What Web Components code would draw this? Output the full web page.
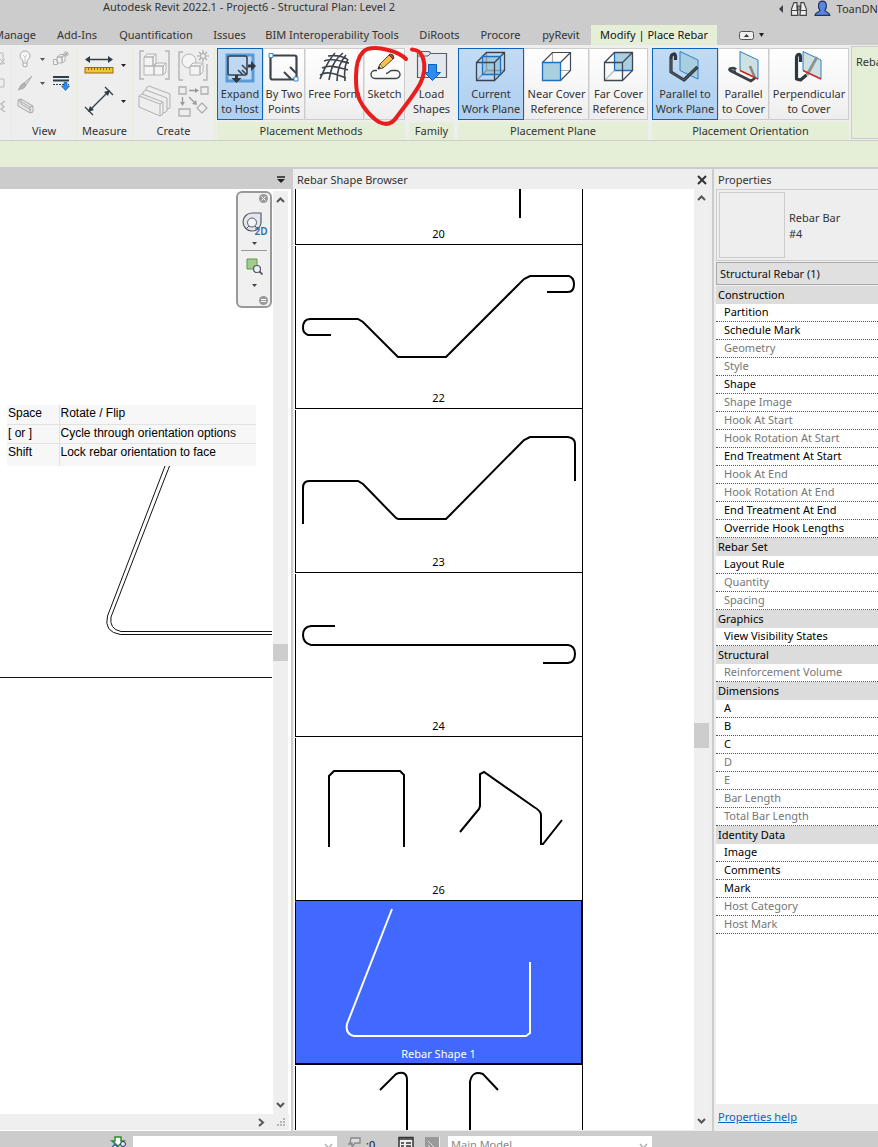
<!DOCTYPE html>
<html lang="en">
<head>
<meta charset="utf-8">
<title>Autodesk Revit 2022.1 - Project6 - Structural Plan: Level 2</title>
<style>
html, body { margin: 0; height: 100%; overflow: hidden; }
body { font: 11px/16px "Noto Sans", "Open Sans", sans-serif; color: #333; background: #ccc; }
</style>
</head>
<body>
<revit-app></revit-app>

<script>
function define(name, markup, setup) {
  const template = document.createElement('template');
  template.innerHTML = '<style>*{box-sizing:border-box}button{font:inherit;color:inherit;background:none;border:0;padding:0;margin:0}svg{display:block}</style>' + markup;
  customElements.define(name, class extends HTMLElement {
    constructor() {
      super();
      this.attachShadow({ mode: 'open' }).append(template.content.cloneNode(true));
    }
    connectedCallback() { if (setup) setup(this, this.shadowRoot); }
  });
}

/* ---------- title bar ---------- */
define('title-bar', `
<style>
:host { display: flex; height: 25px; position: relative; flex: none; }
h1 { margin: 0; padding-left: 103px; font-size: 11px; line-height: 13px; font-weight: 400; flex: 1; white-space: nowrap; }
.account { display: flex; align-items: center; gap: 6px; height: 17px; width: 100px; white-space: nowrap; }
</style>
<h1>Autodesk Revit 2022.1 - Project6 - Structural Plan: Level 2</h1>
<div class="account">
  <svg width="6" height="8" viewBox="0 0 6 8"><path d="M5 0v8L1 4z" fill="#3a3f47"/></svg>
  <svg width="18" height="17" viewBox="0 0 18 17"><g fill="#eee" stroke="#444" stroke-width="1.2"><path d="M4 2.500h3v4l1 9H1.500V9z"/><path d="M11 2.500h3l2.500 6.500v6.500H10l1-9z"/><path d="M7.500 6h3v4h-3z" fill="#999"/><path d="M1.500 10.500h6M10.500 10.500h6"/></g></svg>
  <svg width="17" height="17" viewBox="0 0 17 17"><path d="M1 15.500c0-3 4-3 5-5C3.500 7 4 1 8.500 1S13.500 7 11 10.500c1 2 5 2 5 5z" fill="#5b86e0" stroke="#22335f" stroke-width="1.200"/></svg>
  <span>ToanDN</span>
</div>`);

/* ---------- ribbon tabs ---------- */
define('ribbon-tabs', `
<style>
:host { display: flex; height: 20px; flex: none; }
button { flex: none; height: 20px; line-height: 20px; text-align: center; white-space: nowrap; width: var(--w); }
.first { display: flex; justify-content: flex-end; width: 46px; padding-right: 10px; overflow: hidden; }
.active { background: #e5efd8; color: #111; }
.more { display: flex; align-items: center; gap: 5px; margin-left: 22px; }
</style>
<button class="first">Manage</button>
<button style="--w:62px">Add-Ins</button>
<button style="--w:96px">Quantification</button>
<button style="--w:51px">Issues</button>
<button style="--w:154px">BIM Interoperability Tools</button>
<button style="--w:61px">DiRoots</button>
<button style="--w:61px">Procore</button>
<button style="--w:60px">pyRevit</button>
<button class="active" style="--w:126px">Modify | Place Rebar</button>
<button class="more" aria-label="Minimize ribbon">
  <svg width="15" height="9" viewBox="0 0 15 9"><rect x=".5" y=".5" width="14" height="8" rx="2" fill="#eee" stroke="#555"/><path d="M5 6l2.500-3L10 6z" fill="#333"/></svg>
  <svg width="5" height="4" viewBox="0 0 5 4"><path d="M0 0h5L2.500 4z" fill="#222"/></svg>
</button>`);

/* ---------- ribbon building blocks ---------- */
define('ribbon-panel', `
<style>
:host { display: flex; flex-direction: column; flex: none; width: var(--w); padding: 1px 2px 0; border-right: 1px solid #e5efd8; background: #eee; }
:host([contextual]) { border-right: 0; }
.tools { display: flex; height: 75px; }
.label { height: 18px; line-height: 18px; text-align: center; white-space: nowrap; }
:host([contextual]) .label { background: #e5efd8; }
</style>
<div class="tools"><slot></slot></div>
<div class="label"></div>`,
(host, root) => { root.querySelector('.label').textContent = host.getAttribute('label') || ''; });

define('ribbon-button', `
<style>
:host { display: block; width: var(--w); height: 74px; padding-top: 1px; }
button { display: flex; flex-direction: column; align-items: center; width: 100%; height: 72px; padding-top: 2px; gap: 3px;
  border: 1px solid #ccc; border-left-color: #e2e2e2; background: linear-gradient(#fff, #eee); line-height: 15px; text-align: center; white-space: pre; }
:host([plain]) button { border-color: transparent; background: none; }
:host([checked]) button { border-color: #0a64bd; background: linear-gradient(#c3dbf4, #aed0f1); }
svg, ::slotted(svg) { display: block; flex: none; }
</style>
<button><slot></slot><span></span></button>`,
(host, root) => { root.querySelector('span').textContent = host.getAttribute('label').replace('|', '\n'); });

define('ribbon-bar', `
<style>
:host { display: flex; height: 95px; flex: none; background: #eee; border-top: 1px solid #eee; overflow: hidden; position: relative; }
.cut { display: grid; grid-template-rows: 24px 24px 22px; width: 8px; align-items: center; margin-left: -2px; }
.view { display: grid; grid-template-columns: 22px 12px 1fr; grid-template-rows: 24px 24px 22px; width: 100%; align-items: center; justify-items: center; }
.measure { display: grid; grid-template-columns: 34px 1fr; grid-template-rows: 36px 36px; padding-left: 3px; width: 100%; place-items: center; }
.create { display: grid; grid-template-columns: 39px 37px; grid-template-rows: 36px 36px; width: 100%; place-items: center; }
.rebar { flex: 1; min-width: 0; height: 93px; background: #e5efd8; border: 1px solid #ccc; border-right: 0; padding: 7px 0 0 4px; white-space: nowrap; }
</style>
<ribbon-panel style="--w:12px"><div class="cut">
  <svg width="6" height="16" viewBox="0 0 6 16"><path d="M0 2h3v11H0M0 8l5 5M5 8l-5 5" fill="none" stroke="#bbb"/></svg>
  <svg width="6" height="16" viewBox="0 0 6 16"><path d="M0 4h4v8H0" fill="none" stroke="#bbb"/></svg>
  <svg width="6" height="16" viewBox="0 0 6 16"><path d="M5 3L1 6l3 3-3 2 4 3" fill="none" stroke="#bbb" stroke-width="1.500"/></svg>
</div></ribbon-panel>
<ribbon-panel label="View" style="--w:65px"><div class="view">
  <button aria-label="Hide in view"><svg width="16" height="18" viewBox="0 0 16 18"><path d="M6 12C6 9 3 9 3 6a5 5 0 0 1 10 0c0 3-3 3-3 6v4l-2 1-2-1zM6 13h4" fill="#f7f7f7" stroke="#aaa"/><path d="M6 5l2 2 2-2M8 7v5" fill="none" stroke="#ccc"/></svg></button>
  <svg width="5" height="3" viewBox="0 0 5 3"><path d="M0 0h5L2.500 3z" fill="#555"/></svg>
  <button aria-label="Override graphics"><svg width="18" height="16" viewBox="0 0 18 16"><g fill="#f2f2f2" stroke="#aaa" stroke-width=".9"><path d="M1.500 8.500h4v5h-4zM5 6l3-2.500h4L9.500 6zM5 6h5v6H5zM10 6l3-2v6l-3 2z"/><path d="M14 0v6M11 3h6M12 1l4 4M16 1l-4 4"/></g></svg></button>
  <button aria-label="Paint"><svg width="16" height="16" viewBox="0 0 16 16"><path d="M15 1L7 8l2 2z" fill="#ddd" stroke="#aaa"/><path d="M7 8l2 2c-1 4-5 4-8 5 2-2 2-6 6-7z" fill="#b4b4b4" stroke="#999" stroke-width=".6"/></svg></button>
  <svg width="5" height="3" viewBox="0 0 5 3"><path d="M0 0h5L2.500 3z" fill="#555"/></svg>
  <button aria-label="Linework"><svg width="17" height="16" viewBox="0 0 17 16"><path d="M0 2h16M0 5.500h16" stroke="#2f3c49" stroke-width="2"/><path d="M0 9.500h16" stroke="#2f3c49" stroke-dasharray="2 1"/><path d="M11 7.500h3V11h2.500l-4 4.500L8.500 11H11z" fill="#2c8cf0" stroke="#0a5cb8" stroke-width=".7"/></svg></button>
  <button aria-label="Section box"><svg width="17" height="16" viewBox="0 0 17 16"><path d="M1 2l3-1 12 7v6l-3 1L1 8zM1 2l12 7v6M13 9l3-1M4 1v5l10 6" fill="#e6e6e6" stroke="#aaa"/></svg></button>
</div></ribbon-panel>
<ribbon-panel label="Measure" style="--w:56px"><div class="measure">
  <button aria-label="Measure between references"><svg width="30" height="20" viewBox="0 0 30 20"><path d="M3 4.500h24" stroke="#2f3c49" stroke-width="1.500"/><path d="M1 4.500L6 1v7zM29 4.500L24 1v7z" fill="#2f3c49"/><rect x="1" y="12.500" width="28" height="5.500" fill="#f3c433" stroke="#a0641a"/><path d="M4.500 13v2M7.500 13v2M10.500 13v2M13.500 13v2M16.500 13v2M19.500 13v2M22.500 13v2M25.500 13v2" stroke="#7a4c10" stroke-width=".8"/></svg></button>
  <svg width="5" height="3" viewBox="0 0 5 3"><path d="M0 0h5L2.500 3z" fill="#222"/></svg>
  <button aria-label="Aligned dimension"><svg width="30" height="30" viewBox="0 0 30 30"><path d="M6 24L24 6M1 21l8 8M21 1l8 8" stroke="#2f3c49" stroke-width="1.300"/><path d="M4 26l2-6 4 4zM26 4l-6 2 4 4z" fill="#2f3c49"/></svg></button>
  <svg width="5" height="3" viewBox="0 0 5 3"><path d="M0 0h5L2.500 3z" fill="#222"/></svg>
</div></ribbon-panel>
<ribbon-panel label="Create" style="--w:82px"><div class="create">
  <button aria-label="Create group"><svg width="31" height="30" viewBox="0 0 31 30"><g fill="none" stroke="#b4b4b4" stroke-width="1.400"><path d="M5 1H1v28h4M26 1h4v28h-4"/></g><g fill="#f4f4f4" stroke="#b4b4b4"><path d="M5 7h9v9H5zM5 7l3-3h9l-3 3zM14 7l3-3v9l-3 3zM5 16h10v9H5zM15 16h9v9h-9zM15 16l3-3h9l-3 3zM24 16l3-3v9l-3 3z"/></g></svg></button>
  <button aria-label="Create similar"><svg width="32" height="31" viewBox="0 0 32 31"><path d="M6 2H2v28h4M26 30h4V14" fill="none" stroke="#b4b4b4" stroke-width="1.400"/><g fill="#f4f4f4" stroke="#b4b4b4"><circle cx="12" cy="11" r="7"/><path d="M13 16h10v9H13zM13 16l3-3h10l-3 3zM23 16l3-3v9l-3 3z"/></g><path d="M26 0v12M20 6h12M22 2l8 8M30 2l-8 8" stroke="#aaa" stroke-width="1.200"/><circle cx="26" cy="6" r="2.500" fill="#eee" stroke="#aaa"/></svg></button>
  <button aria-label="Create assembly"><svg width="33" height="32" viewBox="0 0 33 32"><g fill="#eee" stroke="#b0b0b0"><path d="M8 3l3-2 21 8v14l-3 1L8 15z"/><path d="M5 7l3-2 21 8v13l-3 2L5 19z"/><path d="M1 11l3-2 21 8v12l-3 2L1 22zM1 11l21 8v12M22 19l3-2"/></g></svg></button>
  <button aria-label="Create parts"><svg width="32" height="32" viewBox="0 0 32 32"><g fill="#eee" stroke="#b0b0b0" stroke-width="1.300"><path d="M2 2h7v7H2zM24 2h7v7h-7zM2 24h11v7H2zM25 18l5 5-5 5-5-5z"/></g><path d="M12 5.500h7M5.500 12v5M12 12l5 5" stroke="#999" stroke-width="1.300"/><path d="M22 5.500L18 3v5zM5.500 21L3 17h5zM20 20l-5-1 4-4z" fill="#999"/></svg></button>
</div></ribbon-panel>

<ribbon-panel contextual label="Placement Methods" style="--w:192px">
  <ribbon-button checked label="Expand|to Host" style="--w:46px"><svg width="32" height="32" viewBox="0 0 32 32"><path d="M3 4h26v26H3z" fill="none" stroke="#5b9bd5" stroke-width="3"/><rect x="4" y="5" width="19" height="19" rx="2" fill="none" stroke="#3d434c" stroke-width="1.600"/><path d="M14 19l5 5M18 14l5 5M18 19l4 4" stroke="#3d434c" stroke-width="1.600"/><path d="M24 13.500h3V10l5 5-5 5v-3.500h-3zM11 24h3v3h3.500l-5 5-5-5H11z" fill="#333840"/></svg></ribbon-button>
  <ribbon-button label="By Two|Points" style="--w:42px"><svg width="32" height="32" viewBox="0 0 32 32"><rect x="2.500" y="4.500" width="26" height="24" rx="2" fill="none" stroke="#3d434c" stroke-width="2.200"/><path d="M16 21l7 7M22 16l6 6" stroke="#3d434c" stroke-width="2"/><path d="M1 2.500h4v4H1zM26 26h4v4h-4z" fill="#fff" stroke="#3a87c8"/></svg></ribbon-button>
  <ribbon-button label="Free Form" style="--w:59px"><svg width="32" height="32" viewBox="0 0 32 32"><g fill="none" stroke="#3d434c" stroke-width="1.600"><path d="M1 28C5 19 8 11 16 2M10 29C12 18 14 10 24 2M18 30c0-9 2-18 9-26M26 30c-1-8-1-15 3-22M5 10c8-3 15 0 25 2M3 17c8-4 17 0 26 2M1 24c8-5 17 0 26 3M9 5c7-1 14 0 19 3"/></g></svg></ribbon-button>
  <ribbon-button label="Sketch" style="--w:41px"><svg width="32" height="32" viewBox="0 0 32 32"><path d="M8 19.500H6a4 4 0 0 0 0 8h21a3.500 3.500 0 0 0 0-8h-4c-3 0-3 3-6 3" fill="none" stroke="#3d434c" stroke-width="1.400"/><path d="M9 18l2-5 9-9 4 4-10 9z" fill="#f6c04a" stroke="#5a4632"/><path d="M20 4l1-1q4 0 4 4l-1 1z" fill="#c8483d" stroke="#5a3232"/><path d="M9 18l2-5 3 4z" fill="#fff3da" stroke="#5a4632" stroke-width=".8"/><path d="M9 18l1-3 2 2z" fill="#222"/></svg></ribbon-button>
</ribbon-panel>
<ribbon-panel contextual label="Family" style="--w:49px">
  <ribbon-button plain label="Load|Shapes" style="--w:45px"><svg width="32" height="32" viewBox="0 0 32 32"><path d="M1.500 26.500v-24q0-2 2-2h8q3 0 3 2h16v24z" fill="#e3e7ee" stroke="#5b6068" stroke-width="1.200"/><path d="M2 5h10l2.500-2.500" fill="none" stroke="#5b6068"/><path d="M12.500 13.500h8v8h4l-8 8-8-8h4z" fill="#2c8cf0" stroke="#0a5cb8"/></svg></ribbon-button>
</ribbon-panel>
<ribbon-panel contextual label="Placement Plane" style="--w:194px">
  <ribbon-button checked label="Current|Work Plane" style="--w:66px"><svg width="32" height="32" viewBox="0 0 32 32"><path d="M7.500 5.500h18v18h-18z" fill="#9fc9de"/><g fill="none" stroke="#3a4250" stroke-width="1.300"><path d="M11.500 19.500h18M11.500 1.500v18l-10 10" stroke="#8b97a5"/><path d="M1.500 11.500h18v18h-18zM1.500 11.500l10-10h18v18l-10 10M19.500 11.500l10-10"/></g><path d="M7.500 5.500h18v18h-18z" fill="none" stroke="#1d6fc0" stroke-width="1.300"/></svg></ribbon-button>
  <ribbon-button label="Near Cover|Reference" style="--w:65px"><svg width="32" height="32" viewBox="0 0 32 32"><g fill="none" stroke="#3f4654" stroke-width="1.200"><path d="M11.500 1.500v18h18M11.500 19.500l-10 10" stroke="#aaa"/><path d="M1.500 11.500l10-10h18v18l-10 10M19.500 11.500l10-10"/></g><path d="M1.500 11.500h18v18h-18z" fill="#a9cfe1" stroke="#1d6fc0" stroke-width="1.300"/></svg></ribbon-button>
  <ribbon-button label="Far Cover|Reference" style="--w:59px"><svg width="32" height="32" viewBox="0 0 32 32"><path d="M11.500 1.500h18v18h-18z" fill="#a9cfe1"/><path d="M11.500 1.500v18h18" fill="none" stroke="#1d6fc0" stroke-width="1.300"/><g fill="none" stroke="#3f4654" stroke-width="1.300"><path d="M11.500 19.500l-10 10" stroke="#bbb"/><path d="M1.500 11.500h18v18h-18zM1.500 11.500l10-10h18v18l-10 10M19.500 11.500l10-10"/></g></svg></ribbon-button>
</ribbon-panel>
<ribbon-panel contextual label="Placement Orientation" style="--w:201px">
  <ribbon-button checked label="Parallel to|Work Plane" style="--w:66px"><svg width="32" height="32" viewBox="0 0 32 32"><path d="M11 .500l18 8.500v19l-18-8.500z" fill="#a9cfde" stroke="#2b7fc8"/><path d="M6.500 9V5.500Q6.500 2.500 4.500 3 2 3.500 2 7v14l13 8L28.500 16" fill="none" stroke="#30363e" stroke-width="3.200" stroke-linejoin="round"/><path d="M2 8v13l13 8L28 16.500" fill="none" stroke="#6a717a" stroke-width=".8"/></svg></ribbon-button>
  <ribbon-button label="Parallel|to Cover" style="--w:51px"><svg width="32" height="32" viewBox="0 0 32 32"><path d="M12 .500l18 8.500v19l-18-8.500z" fill="#cfe0e0" stroke="#2b7fc8"/><path d="M22 15l5 12" stroke="#888" stroke-width="2.500"/><path d="M12 19.500L30 28" stroke="#d42a1e" stroke-width="1.400"/><path d="M8 21L3 20Q0 18 3 17.500q3-1 5 1M3 20l20 10 4-3" fill="none" stroke="#3a4048" stroke-width="2.800" stroke-linejoin="round"/></svg></ribbon-button>
  <ribbon-button label="Perpendicular|to Cover" style="--w:80px"><svg width="32" height="32" viewBox="0 0 32 32"><path d="M10 .500l18 8.500v19L10 19.500z" fill="#cfe0e0" stroke="#2b7fc8"/><path d="M14 24l10-18" stroke="#8d9499" stroke-width="3"/><path d="M7.500 11V6.500Q7.500 3 5.500 3.500 3.500 4 3.500 7v21l4 1 6-5" fill="none" stroke="#30363e" stroke-width="3.200" stroke-linejoin="round"/><path d="M10 19.500L28 28" stroke="#d42a1e" stroke-width="1.400"/></svg></ribbon-button>
</ribbon-panel>
<div class="rebar">Reba</div>`);

/* ---------- scroll bar ---------- */
define('scroll-strip', `
<style>
:host { display: flex; flex-direction: column; justify-content: space-between; align-items: center; width: 15px; background: #efefef; padding: 5px 0; position: relative; }
.thumb { position: absolute; left: 0; right: 0; top: var(--top); height: var(--size); background: #cdcdcd; }
button { display: block; }
</style>
<button aria-label="Scroll up"><svg width="9" height="7" viewBox="0 0 9 7"><path d="M1 6l3.500-3.500L8 6" fill="none" stroke="#555" stroke-width="2"/></svg></button>
<div class="thumb"></div>
<button aria-label="Scroll down"><svg width="9" height="7" viewBox="0 0 9 7"><path d="M1 1l3.500 3.500L8 1" fill="none" stroke="#555" stroke-width="2"/></svg></button>`);

/* ---------- drawing view ---------- */
define('nav-bar', `
<style>
:host { display: flex; flex-direction: column; align-items: center; width: 36px; height: 117px; border: 2px solid #999; border-radius: 6px; background: #f0f0f0; padding: 1px 2px; }
.close { align-self: flex-end; }
.wheel { margin: 9px 4px 0 0; position: relative; }
.wheel span { position: absolute; right: -5px; bottom: -4px; font-size: 10px; line-height: 12px; font-weight: 600; color: #2b6cab; }
.arrow { margin-top: 9px; }
hr { width: 26px; height: 1px; border: 0; background: #999; margin: 5px 0 7px; }
.min { align-self: flex-end; margin-top: auto; }
</style>
<button class="close" aria-label="Close"><svg width="9" height="9" viewBox="0 0 9 9"><circle cx="4.500" cy="4.500" r="4.500" fill="#999"/><path d="M2.500 2.500l4 4M6.500 2.500l-4 4" stroke="#fff"/></svg></button>
<button class="wheel" aria-label="Steering wheel 2D"><svg width="21" height="21" viewBox="0 0 21 21"><path d="M10 1h9v10a9 9 0 1 1-9-10z" fill="#e4e6ec" stroke="#555b66" stroke-width="1.200"/><circle cx="10" cy="10.500" r="4.500" fill="#f4f4f8" stroke="#555b66"/><path d="M7 14l-3 3M13 14l3 3" stroke="#555b66"/></svg><span>2D</span></button>
<svg class="arrow" width="5" height="3" viewBox="0 0 5 3"><path d="M0 0h5L2.500 3z" fill="#444"/></svg>
<hr>
<button aria-label="Zoom in region"><svg width="17" height="17" viewBox="0 0 17 17"><path d="M1 1h10v10H1z" fill="#a3c98c" stroke="#5b9a4b"/><circle cx="11" cy="11" r="3.500" fill="#eef3f6" stroke="#555b66" stroke-width="1.200"/><path d="M13.500 13.500l3 3" stroke="#555b66" stroke-width="1.800"/></svg></button>
<svg class="arrow" width="5" height="3" viewBox="0 0 5 3"><path d="M0 0h5L2.500 3z" fill="#444"/></svg>
<button class="min" aria-label="Collapse"><svg width="9" height="9" viewBox="0 0 9 9"><circle cx="4.500" cy="4.500" r="4.500" fill="#999"/><path d="M2 3.500h5M2 5.500h5" stroke="#fff"/></svg></button>`);

define('key-hints', `
<style>
:host { display: block; width: 249px; background: #f7f7f7; font: 12px/16px "Liberation Sans", Arial, sans-serif; color: #000; }
table { border-collapse: collapse; width: 100%; }
th, td { font-weight: 400; text-align: left; padding: 0 0 0 1px; height: 19px; line-height: 16px; vertical-align: top; border-bottom: 1px solid #e2e2e2; white-space: nowrap; }
th { width: 52px; border-right: 1px solid #e2e2e2; }
tr:last-child > * { height: 23px; border-bottom: 0; }
</style>
<table>
<tr><th scope="row">Space</th><td>Rotate / Flip</td></tr>
<tr><th scope="row">[ or ]</th><td>Cycle through orientation options</td></tr>
<tr><th scope="row">Shift</th><td>Lock rebar orientation to face</td></tr>
</table>`);

define('drawing-view', `
<style>
:host { display: flex; flex-direction: column; min-width: 0; border-right: 2px solid #ccc; background: #fff; padding-bottom: 1px; }
header { display: flex; justify-content: flex-end; align-items: center; height: 20px; padding-right: 6px; background: #ccc; flex: none; }
.row { display: flex; flex: 1; min-height: 0; }
.canvas { flex: 1; position: relative; overflow: hidden; background: #fff; min-width: 0; }
.canvas > svg { position: absolute; left: 0; top: 0; }
key-hints { position: absolute; left: 7px; top: 216px; }
nav-bar { position: absolute; right: 0; top: 2px; }
scroll-strip { margin: 2px 3px 0 1px; }
footer { display: flex; justify-content: flex-end; align-items: center; gap: 12px; height: 16px; padding-right: 3px; margin-right: 2px; background: #efefef; flex: none; }
</style>
<header><button aria-label="View list"><svg width="8" height="7" viewBox="0 0 8 7"><path d="M0 1h8" stroke="#222" stroke-width="1.500"/><path d="M0 3h8L4 7z" fill="#222"/></svg></button></header>
<div class="row">
  <div class="canvas">
    <svg width="272" height="500" viewBox="0 189 272 500" fill="none" stroke="#111" stroke-width="1">
      <path d="M165 466L107.500 616q-4 16 13 18.500H272"/><path d="M169.500 466L111 617q-2 12 10 14.500H272"/>
      <path d="M0 677.500H272"/>
    </svg>
    <key-hints></key-hints>
    <nav-bar></nav-bar>
  </div>
  <scroll-strip style="--top:453px;--size:17px"></scroll-strip>
</div>
<footer><button aria-label="Scroll right"><svg width="7" height="9" viewBox="0 0 7 9"><path d="M1 1l4 3.500L1 8" fill="none" stroke="#555" stroke-width="2"/></svg></button>
<svg width="9" height="9" viewBox="0 0 9 9"><path d="M6 0h2v2H6zM3 3h2v2H3zM6 3h2v2H6zM0 6h2v2H0zM3 6h2v2H3zM6 6h2v2H6z" fill="#b5b5b5"/></svg></footer>`);

/* ---------- rebar shape browser ---------- */
define('shape-card', `
<style>
:host { display: block; position: relative; flex: none; width: 288px; height: 164px; border-right: 1px solid #000; border-bottom: 1px solid #000; background: #fff; color: #000; }
:host::before { content: ""; position: absolute; left: 0; top: 1px; bottom: 0; width: 1px; background: #000; }
:host([selected]) { background: #4169ff; color: #fff; box-shadow: inset -1px -1px #000; }
button { display: flex; flex-direction: column; justify-content: flex-end; width: 100%; height: 100%; align-items: center; }
::slotted(svg) { display: block; width: 287px; height: 143px; fill: none; stroke: currentColor; stroke-width: 2; }
span { line-height: 16px; height: 20px; padding-top: 2px; }
</style>
<button><slot></slot><span></span></button>`,
(host, root) => { root.querySelector('span').textContent = host.getAttribute('label') || ''; });

define('shape-browser', `
<style>
:host { display: flex; flex-direction: column; min-width: 0; border-right: 2px solid #ccc; background: #eee; padding-bottom: 1px; }
header { display: flex; justify-content: space-between; align-items: center; height: 20px; padding: 2px 5px 0 4px; flex: none; }
h2 { margin: 0; font-size: 11px; line-height: 16px; font-weight: 400; }
.row { display: flex; flex: 1; min-height: 0; }
.list { flex: 1; min-width: 0; display: flex; flex-direction: column; overflow: hidden; background: #fff; margin-left: 1px; padding-left: 1px; }
.list > :first-child { margin-top: -108px; }
scroll-strip { margin-right: 3px; }
</style>
<header><h2>Rebar Shape Browser</h2><button aria-label="Close"><svg width="10" height="10" viewBox="0 0 10 10"><path d="M1 1l8 8M9 1L1 9" stroke="#333" stroke-width="2"/></svg></button></header>
<div class="row">
  <div class="list">
    <shape-card label="20"><svg viewBox="295 81 287 143"><path d="M520 90V218"/></svg></shape-card>
    <shape-card label="22"><svg viewBox="295 245 287 143"><path d="M331 335H308Q303 333 303 328 303 319 310 319H358L363 322 396 355 398 357H446L450 353 524 279 530 276H569Q574 278 574 284 574 292 568 292H547"/></svg></shape-card>
    <shape-card label="23"><svg viewBox="295 409 287 143"><path d="M303 524V488Q303 481 309 481H358L363 484 396 518 398 519H446L450 515 524 440 530 437H568Q575 438 575 444V481"/></svg></shape-card>
    <shape-card label="24"><svg viewBox="295 573 287 143"><path d="M335 626H311Q303 627 303 635 303 643 311 645H568Q575 646 575 654 575 662 568 663H543"/></svg></shape-card>
    <shape-card label="26"><svg viewBox="295 737 287 143"><path d="M329 847V776L334 771H400L404 775V847M460 832L479 809 480 806V774L484 772 534 807Q541 811 541 815V844H543L562 820"/></svg></shape-card>
    <shape-card selected label="Rebar Shape 1"><svg viewBox="295 901 287 143"><path d="M392 909L347 1024Q345 1034 354 1036H526L530 1033V962"/></svg></shape-card>
    <shape-card><svg viewBox="295 1065 287 143"><path d="M380 1090L396 1074Q407 1070 407 1080V1180M470 1180V1082Q472 1070 483 1074L498 1090"/></svg></shape-card>
  </div>
  <scroll-strip style="--top:534px;--size:25px"></scroll-strip>
</div>`);

/* ---------- properties palette ---------- */
define('property-palette', `
<style>
:host { display: flex; flex-direction: column; min-width: 0; background: #eee; overflow: hidden; }
h2 { margin: 0; height: 20px; line-height: 22px; padding-left: 4px; font-size: 11px; font-weight: 400; flex: none; }
.type { display: flex; align-items: center; gap: 4px; height: 72px; margin-left: 2px; padding-left: 2px; border: 1px solid #ccc; border-right: 0; flex: none; }
.thumb { width: 66px; height: 66px; border: 1px solid #ccc; }
.type p { margin: 2px 0 0; white-space: nowrap; }
.filter { display: block; appearance: none; width: calc(100% - 2px); height: 23px; margin: 1px 0 1px 2px; padding: 0 0 0 3px; border: 1px solid #aaa; border-right: 0; border-radius: 0; background: #e0e0e0; font: inherit; color: #111; flex: none; }
.body { flex: 1; background: #fff; margin-left: 2px; }
table { border-collapse: separate; border-spacing: 0; width: 100%; }
th { height: 18px; padding: 0 0 0 8px; font-weight: 400; line-height: 16px; vertical-align: top; text-align: left; white-space: nowrap; color: #000; border-bottom: 1px dotted #555; }
th.group { padding-left: 2px; line-height: 17px; background: #dcdcdc; border-bottom: 1px solid #dcdcdc; }
th.off { color: #777; }
footer { height: 27px; padding: 5px 0 0 4px; flex: none; }
a { color: #0066cc; }
</style>
<h2>Properties</h2>
<div class="type"><div class="thumb"></div><p>Rebar Bar<br>#4</p></div>
<select class="filter" aria-label="Category"><option>Structural Rebar (1)</option></select>
<div class="body"><table></table></div>
<footer><a href="#help">Properties help</a></footer>`,
(host, root) => {
  /* "=" marks a group heading, "-" a read-only parameter */
  const rows = ['=Construction', 'Partition', 'Schedule Mark', '-Geometry', '-Style', 'Shape', '-Shape Image', '-Hook At Start',
    '-Hook Rotation At Start', 'End Treatment At Start', '-Hook At End', '-Hook Rotation At End', 'End Treatment At End',
    'Override Hook Lengths', '=Rebar Set', 'Layout Rule', '-Quantity', '-Spacing', '=Graphics', 'View Visibility States',
    '=Structural', '-Reinforcement Volume', '=Dimensions', 'A', 'B', 'C', '-D', '-E', '-Bar Length', '-Total Bar Length',
    '=Identity Data', 'Image', 'Comments', 'Mark', '-Host Category', '-Host Mark'];
  const table = root.querySelector('table');
  if (table.rows.length) return;
  for (const row of rows) {
    const th = document.createElement('th');
    th.scope = 'row';
    if (row[0] === '=') th.className = 'group';
    if (row[0] === '-') th.className = 'off';
    th.textContent = row.replace(/^[=-]/, '');
    table.insertRow().append(th);
  }
});

/* ---------- status bar ---------- */
define('status-bar', `
<style>
:host { display: flex; align-items: flex-start; height: 16px; padding: 5px 0 0 109px; background: #ccc; flex: none; overflow: hidden; }
.pick { position: relative; height: 18px; width: 204px; flex: none; }
select { appearance: none; display: block; width: 100%; height: 18px; border: 0; border-radius: 0; background: #fff; padding: 0 0 0 3px; font: inherit; line-height: 18px; color: #888; }
.pick svg { position: absolute; right: 4px; top: 7px; }
svg { flex: none; }
.sync { margin-right: 7px; }
.req { margin-left: 10px; }
.count { margin-left: 4px; width: 32px; line-height: 18px; color: #111; }
.list { margin-right: 11px; }
.opt { margin-right: 8px; }
</style>
<svg class="sync" width="17" height="16" viewBox="0 0 17 16"><path d="M6 1h6v4h3l-6 5-6-5h3z" fill="#fff" stroke="#2c8a2c" stroke-width="1.500"/><path d="M1 14l5-6 5 6z" fill="#fff" stroke="#2b6cab" stroke-width="1.500"/><circle cx="14" cy="8" r="2.500" fill="#dfe6f5" stroke="#335"/></svg>
<div class="pick"><select aria-label="Active workset"><option></option></select><svg width="9" height="6" viewBox="0 0 9 6"><path d="M1 1l3.500 4L8 1" fill="none" stroke="#aaa" stroke-width="1.300"/></svg></div>
<svg class="req" width="15" height="16" viewBox="0 0 15 16"><path d="M4 2h9v5H8l-3 4V7H3zM1 8h4" fill="#ddd" stroke="#888" stroke-width="1.300"/></svg>
<span class="count">:0</span>
<svg class="list" width="16" height="16" viewBox="0 0 16 16"><path d="M1 1.500h14v13H1z" fill="#eee" stroke="#333" stroke-width="1.500"/><path d="M1 3h14M3 7h3M8 7h5M3 10h3M8 10h5" stroke="#333" stroke-width="1.500"/></svg>
<svg class="opt" width="15" height="16" viewBox="0 0 15 16"><path d="M0 1h14v14H0z" fill="#999"/><path d="M3 5l8 8M3 9l3 3" stroke="#ddd"/><path d="M14.500 1v14" stroke="#eee"/></svg>
<div class="pick"><select aria-label="Design option"><option>Main Model</option></select><svg width="9" height="6" viewBox="0 0 9 6"><path d="M1 1l3.500 4L8 1" fill="none" stroke="#aaa" stroke-width="1.300"/></svg></div>`);

/* ---------- hand-drawn markup ring ---------- */
define('markup-ring', `
<style>:host { display: block; position: absolute; left: 350px; top: 40px; pointer-events: none; }</style>
<svg width="84" height="92" viewBox="350 40 84 92"><path d="M406 59C402 55 396 52 388 50 376 47 368 47 363 52 358 57 356 65 356 77 356 90 357 97 363 106 368 113 374 119 379 122 385 125 391 125 396 118 405 106 414 95 420 84 424 76 426 67 423 58 421 52 418 50 412 49.500" fill="none" stroke="#e81e1e" stroke-width="4" stroke-linecap="round"/></svg>`);

define('revit-app', `
<style>
:host { display: flex; flex-direction: column; height: 100vh; position: relative; overflow: hidden; }
.options { height: 27px; flex: none; background: #e5efd8; border-top: 1px solid #ccc; }
main { flex: 1; min-height: 0; display: grid; grid-template-columns: minmax(0, 293fr) minmax(0, 421fr) minmax(0, 164fr); grid-template-rows: minmax(0, 1fr); border-top: 2px solid #ccc; background: #eee; }
</style>
<title-bar></title-bar>
<ribbon-tabs></ribbon-tabs>
<ribbon-bar></ribbon-bar>
<div class="options"></div>
<main><drawing-view></drawing-view><shape-browser></shape-browser><property-palette></property-palette></main>
<status-bar></status-bar>
<markup-ring></markup-ring>`);
</script>
</body>
</html>
